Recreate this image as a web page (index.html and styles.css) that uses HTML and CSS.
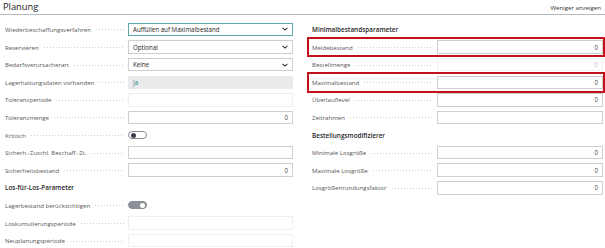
FILE: index.html
```html
<!DOCTYPE html>
<html>
  <head>
    <link rel="stylesheet" href="styles.css">
  </head>
  <body>
    <div class="card">
      <div class="card-head">
        <h1 class="title">Planung</h1>
        <span class="less">Weniger anzeigen</span>
      </div>

      <div class="cols">
        <div class="col col-left">
          <div class="field">
            <span class="label">Wiederbeschaffungsverfahren</span>
            <div class="box select focused"><span>Auffüllen auf Maximalbestand</span>
              <svg class="chev" width="6" height="4" viewBox="0 0 6 4"><path d="M0.6 0.8 L3 3.1 L5.4 0.8" fill="none" stroke="#333" stroke-width="1.1"/></svg>
            </div>
          </div>
          <div class="field">
            <span class="label">Reservieren</span>
            <div class="box select"><span>Optional</span>
              <svg class="chev" width="6" height="4" viewBox="0 0 6 4"><path d="M0.6 0.8 L3 3.1 L5.4 0.8" fill="none" stroke="#333" stroke-width="1.1"/></svg>
            </div>
          </div>
          <div class="field">
            <span class="label">Bedarfsverursacherart</span>
            <div class="box select"><span>Keine</span>
              <svg class="chev" width="6" height="4" viewBox="0 0 6 4"><path d="M0.6 0.8 L3 3.1 L5.4 0.8" fill="none" stroke="#333" stroke-width="1.1"/></svg>
            </div>
          </div>
          <div class="field">
            <span class="label">Lagerhaltungsdaten vorhanden</span>
            <div class="box readonly"><span class="link">Ja</span></div>
          </div>
          <div class="field">
            <span class="label">Toleranzperiode</span>
            <div class="box disabled"></div>
          </div>
          <div class="field">
            <span class="label">Toleranzmenge</span>
            <div class="box num">0</div>
          </div>
          <div class="field">
            <span class="label">Kritisch</span>
            <div class="toggle"></div>
          </div>
          <div class="field">
            <span class="label">Sicherh.-Zuschl. Beschaff.-Zt.</span>
            <div class="box"></div>
          </div>
          <div class="field">
            <span class="label">Sicherheitsbestand</span>
            <div class="box num">0</div>
          </div>
          <div class="group">Los-für-Los-Parameter</div>
          <div class="field">
            <span class="label">Lagerbestand berücksichtigen</span>
            <div class="toggle on"></div>
          </div>
          <div class="field">
            <span class="label">Loskumulierungsperiode</span>
            <div class="box disabled"></div>
          </div>
          <div class="field">
            <span class="label">Neuplanungsperiode</span>
            <div class="box disabled"></div>
          </div>
        </div>

        <div class="col col-right">
          <div class="group">Minimalbestandsparameter</div>
          <div class="field marked">
            <span class="label">Meldebestand</span>
            <div class="box num">0</div>
          </div>
          <div class="field">
            <span class="label">Bestellmenge</span>
            <div class="box disabled num">0</div>
          </div>
          <div class="field marked">
            <span class="label">Maximalbestand</span>
            <div class="box num">0</div>
          </div>
          <div class="field">
            <span class="label">Überlauflevel</span>
            <div class="box num">0</div>
          </div>
          <div class="field">
            <span class="label">Zeitrahmen</span>
            <div class="box"></div>
          </div>
          <div class="group">Bestellungsmodifizierer</div>
          <div class="field">
            <span class="label">Minimale Losgröße</span>
            <div class="box num">0</div>
          </div>
          <div class="field">
            <span class="label">Maximale Losgröße</span>
            <div class="box num">0</div>
          </div>
          <div class="field">
            <span class="label">Losgrößenrundungsfaktor</span>
            <div class="box num">0</div>
          </div>
        </div>
      </div>
    </div>
  </body>
</html>
```

FILE: styles.css
```css
body {
  margin: 0;
  background: #fff;
  font-family: "Open Sans", "Noto Sans", sans-serif;
  color: #212121;
}

.card-head {
  display: flex;
  justify-content: space-between;
  align-items: center;
  height: 14px;
  padding: 0 4px 0 3px;
  border-bottom: 1px solid #b3bac2;
}

.title {
  margin: 0;
  font-size: 9.3px;
  font-weight: 500;
  line-height: 14px;
  color: #212121;
}

.less {
  font-size: 6.1px;
  color: #333;
}

.cols {
  display: grid;
  grid-template-columns: 288px 291px;
  column-gap: 19px;
  padding: 5.7px 4px 0 5px;
}

.field,
.group {
  position: relative;
  height: 17.6px;
  display: flex;
  align-items: center;
}

.field {
  display: grid;
  align-items: center;
}

.col-left .field {
  grid-template-columns: 123px 1fr;
}

.col-right .field {
  grid-template-columns: 125px 1fr;
}

.label {
  display: flex;
  align-items: center;
  font-size: 6.1px;
  color: #575757;
  white-space: nowrap;
  overflow: hidden;
}

.label::after {
  content: "";
  flex: 1;
  height: 1px;
  margin: 1px 4px 0 5px;
  background-image: linear-gradient(to right, #cdcdcd 1px, transparent 1px);
  background-size: 3px 1px;
  background-repeat: repeat-x;
}

.group {
  font-size: 6.4px;
  font-weight: 600;
  color: #262626;
}

.box {
  box-sizing: border-box;
  height: 13.5px;
  border: 1px solid #cfcfcf;
  background: #fff;
  display: flex;
  align-items: center;
  padding: 0 4px 0 4px;
  font-size: 6.2px;
  color: #262626;
}

.box.select {
  justify-content: space-between;
}

.box.focused {
  border-color: #5fa8ad;
}

.box.readonly {
  background: #e9eaeb;
  border-color: #e9eaeb;
}

.box.disabled {
  border-color: #efefef;
  color: #bdbdbd;
}

.box.num {
  justify-content: flex-end;
  color: #444;
}

.box.disabled.num {
  color: #c2c2c2;
}

.link {
  color: #2a7d86;
}

.chev {
  display: block;
}

.toggle {
  position: relative;
  box-sizing: border-box;
  width: 19px;
  height: 8px;
  border: 1px solid #8d8d8d;
  border-radius: 4px;
  background: #fff;
}

.toggle::after {
  content: "";
  position: absolute;
  left: 1.5px;
  top: 0.5px;
  width: 5px;
  height: 5px;
  border-radius: 50%;
  background: #3a4150;
}

.toggle.on {
  border-color: #8b9098;
  background: #8b9098;
}

.toggle.on::after {
  left: auto;
  right: 1.5px;
  background: #fff;
}

.marked::before {
  content: "";
  position: absolute;
  left: -5px;
  right: -2px;
  top: -1.5px;
  bottom: -1.5px;
  border: 2px solid #c1121c;
  pointer-events: none;
}
```
